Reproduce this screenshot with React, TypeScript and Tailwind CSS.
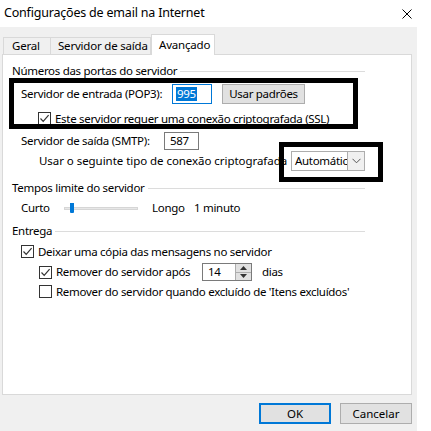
import React from "react";

const FONT = { fontFamily: '"Noto Sans", "Open Sans", sans-serif' };

function Check({ checked }: { checked: boolean }) {
  return (
    <div className="w-[13px] h-[13px] border border-[#333333] bg-white flex items-center justify-center shrink-0">
      {checked && (
        <svg width="11" height="11" viewBox="0 0 11 11">
          <path d="M1.5 5.5 L4.2 8.3 L9.6 2.2" fill="none" stroke="#333" strokeWidth="1.2" />
        </svg>
      )}
    </div>
  );
}

function GroupHeader({ label }: { label: string }) {
  return (
    <div className="flex items-center w-[353px] h-[14px]">
      <span className="whitespace-nowrap leading-none">{label}</span>
      <div className="flex-1 h-px bg-[#dcdcdc] ml-[3px]" />
    </div>
  );
}

export default function App() {
  return (
    <div className="w-[431px] h-[431px] bg-white relative text-[11.5px] text-black overflow-hidden" style={FONT}>
      {/* Title bar */}
      <div className="h-[27px] flex items-center justify-between pl-[4px] pr-[19px]">
        <span className="text-[12.5px] tracking-[-0.2px]">Configurações de email na Internet</span>
        <svg width="10" height="10" viewBox="0 0 10 10">
          <path d="M0.5 0.5 L9.5 9.5 M9.5 0.5 L0.5 9.5" stroke="#000" strokeWidth="1" />
        </svg>
      </div>
      {/* Body */}
      <div className="w-[417px] h-[404px] bg-[#f0f0f0] flex flex-col">
        {/* Tabs */}
        <div className="flex items-end h-[27px] pl-[3px] relative z-10">
          <div className="h-[17px] w-[48px] border border-[#d9d9d9] border-b-0 flex items-center pl-[8px] tracking-[-0.2px]">Geral</div>
          <div className="h-[17px] w-[100px] border-t border-r border-[#d9d9d9] flex items-center pl-[7px] tracking-[-0.2px]">Servidor de saída</div>
          <div className="h-[21px] w-[64px] bg-white border border-[#d9d9d9] border-b-0 flex items-start pt-[1px] pl-[7px] -mb-px tracking-[-0.2px]">Avançado</div>
        </div>
        {/* Panel */}
        <div className="ml-[2px] w-[410px] h-[341px] bg-white border border-[#d9d9d9] pl-[9px] pt-[9px] tracking-[-0.3px]">
          <GroupHeader label="Números das portas do servidor" />
          <div className="flex items-center h-[20px] mt-[6px] pl-[9px]">
            <span className="w-[151px]">Servidor de entrada (POP3):</span>
            <div className="w-[40px] h-[20px] border border-[#0078d7] flex items-center pl-[3px]">
              <span className="bg-[#0078d7] text-white leading-[14px] px-px">995</span>
            </div>
            <div className="ml-[10px] w-[83px] h-[20px] bg-[#e1e1e1] border border-[#adadad] flex items-center justify-center">Usar padrões</div>
          </div>
          <div className="flex items-center h-[13px] mt-[8px] pl-[26px] gap-[4px]">
            <Check checked />
            <span>Este servidor requer uma conexão criptografada (SSL)</span>
          </div>
          <div className="flex items-center h-[18px] mt-[7px] pl-[9px]">
            <span className="w-[143px]">Servidor de saída (SMTP):</span>
            <div className="w-[35px] h-[18px] border border-[#7a7a7a] flex items-center pl-[5px]">587</div>
          </div>
          <div className="flex items-center h-[20px] mt-[1px] pl-[27px]">
            <span className="w-[252px] whitespace-nowrap tracking-[-0.05px]">Usar o seguinte tipo de conexão criptografada</span>
            <div className="w-[74px] h-[20px] border border-[#adadad] bg-white flex items-center">
              <span className="w-[55px] pl-[3px] whitespace-nowrap overflow-hidden">Automátic</span>
              <div className="w-[17px] h-[18px] border-l border-[#adadad] bg-[#f0f0f0] flex items-center justify-center">
                <svg width="9" height="6" viewBox="0 0 9 6">
                  <path d="M0.5 0.8 L4.5 4.8 L8.5 0.8" fill="none" stroke="#555" strokeWidth="1" />
                </svg>
              </div>
            </div>
          </div>
          <div className="mt-[10px]">
            <GroupHeader label="Tempos limite do servidor" />
          </div>
          <div className="flex items-center h-[14px] mt-[6px] pl-[9px]">
            <span className="w-[43px]">Curto</span>
            <div className="relative w-[74px] h-[10px] flex items-center">
              <div className="w-full h-[3px] bg-[#e7e7e7] border border-[#d6d6d6]" />
              <div className="absolute left-[6px] top-0 w-[4px] h-[10px] bg-[#0078d7] rounded-b-[1px]" />
            </div>
            <span className="ml-[14px] w-[42px]">Longo</span>
            <span>1 minuto</span>
          </div>
          <div className="mt-[9px]">
            <GroupHeader label="Entrega" />
          </div>
          <div className="flex items-center h-[13px] mt-[7px] pl-[9px] gap-[4px]">
            <Check checked />
            <span>Deixar uma cópia das mensagens no servidor</span>
          </div>
          <div className="flex items-center h-[18px] mt-[5px] pl-[27px]">
            <Check checked />
            <span className="ml-[4px] w-[146px]">Remover do servidor após</span>
            <div className="w-[50px] h-[18px] border border-[#7a7a7a] flex items-center">
              <span className="flex-1 pl-[5px]">14</span>
              <div className="w-[16px] h-[16px] flex flex-col border-l border-[#adadad]">
                <div className="flex-1 bg-[#e1e1e1] border-b border-[#adadad] flex items-center justify-center">
                  <svg width="7" height="4" viewBox="0 0 7 4"><path d="M0 4 L3.5 0 L7 4 Z" fill="#333" /></svg>
                </div>
                <div className="flex-1 bg-[#e1e1e1] flex items-center justify-center">
                  <svg width="7" height="4" viewBox="0 0 7 4"><path d="M0 0 L3.5 4 L7 0 Z" fill="#333" /></svg>
                </div>
              </div>
            </div>
            <span className="ml-[10px]">dias</span>
          </div>
          <div className="flex items-center h-[13px] mt-[4px] pl-[27px] gap-[4px]">
            <Check checked={false} />
            <span>Remover do servidor quando excluído de 'Itens excluídos'</span>
          </div>
        </div>
        {/* Buttons */}
        <div className="flex justify-end gap-[9px] pr-[5px] mt-[8px]">
          <div className="w-[72px] h-[21px] bg-[#e1e1e1] border-2 border-[#0078d7] flex items-center justify-center">OK</div>
          <div className="w-[72px] h-[21px] bg-[#e1e1e1] border border-[#adadad] flex items-center justify-center">Cancelar</div>
        </div>
      </div>
      {/* Highlight overlays */}
      <div className="absolute left-[9px] top-[78px] w-[349px] h-[51px] border-[5px] border-black pointer-events-none" />
      <div className="absolute left-[279px] top-[142px] w-[104px] h-[40px] border-[5px] border-black pointer-events-none" />
    </div>
  );
}
